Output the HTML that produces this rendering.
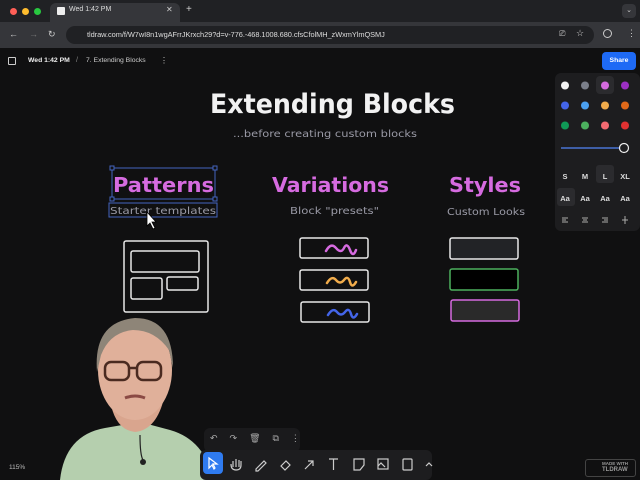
<!DOCTYPE html>
<html><head><meta charset="utf-8"><style>
*{margin:0;padding:0;box-sizing:border-box}
body{width:640px;height:480px;overflow:hidden;background:#101011;font-family:"Liberation Sans",sans-serif;position:relative}
.abs{position:absolute}
</style></head><body>
<!-- tab bar -->
<div class="abs" style="left:0;top:0;width:640px;height:22px;background:#202124"></div>
<div class="abs" style="left:10px;top:8px;width:7px;height:7px;border-radius:50%;background:#ff5f57"></div>
<div class="abs" style="left:22px;top:8px;width:7px;height:7px;border-radius:50%;background:#febc2e"></div>
<div class="abs" style="left:34px;top:8px;width:7px;height:7px;border-radius:50%;background:#28c840"></div>
<div class="abs" style="left:50px;top:3px;width:130px;height:19px;background:#35363a;border-radius:6px 6px 0 0"></div>
<div class="abs" style="left:57px;top:7px;width:8px;height:8px;background:#eee;border-radius:1px"></div>
<div class="abs" style="left:69px;top:6px;color:#ddd;font-size:7px">Wed 1:42 PM</div>
<div class="abs" style="left:166px;top:5px;color:#ccc;font-size:8px">✕</div>
<div class="abs" style="left:186px;top:4px;color:#ccc;font-size:10px">+</div>
<div class="abs" style="left:622px;top:4px;width:14px;height:14px;background:#35363a;border-radius:4px;color:#ccc;font-size:7px;text-align:center;line-height:14px">⌄</div>
<!-- address bar -->
<div class="abs" style="left:0;top:22px;width:640px;height:26px;background:#35363a"></div>
<div class="abs" style="left:9px;top:29px;color:#ccc;font-size:9px">←</div>
<div class="abs" style="left:29px;top:29px;color:#777;font-size:9px">→</div>
<div class="abs" style="left:48px;top:29px;color:#ccc;font-size:9px">↻</div>
<div class="abs" style="left:66px;top:26px;width:528px;height:18px;background:#202124;border-radius:9px"></div>
<div class="abs" style="left:87px;top:30px;color:#ddd;font-size:7.4px;letter-spacing:-0.05px">tldraw.com/f/W7wI8n1wgAFrrJKrxch29?d=v-776.-468.1008.680.cfsCfolMH_zWxmYlmQSMJ</div>
<div class="abs" style="left:559px;top:29px;color:#ccc;font-size:8px">⎚</div>
<div class="abs" style="left:576px;top:28px;color:#ccc;font-size:9px">☆</div>
<div class="abs" style="left:603px;top:29px;width:9px;height:9px;border:1px solid #ccc;border-radius:50%"></div>
<div class="abs" style="left:627px;top:28px;color:#ccc;font-size:9px">⋮</div>
<!-- tldraw top -->
<div class="abs" style="left:8px;top:57px;width:8px;height:8px;border:1px solid #ccc;border-radius:1px"></div>
<div class="abs" style="left:28px;top:57px;color:#eee;font-size:6.8px;font-weight:bold">Wed 1:42 PM</div>
<div class="abs" style="left:76px;top:57px;color:#888;font-size:7px">/</div>
<div class="abs" style="left:86px;top:57px;color:#ccc;font-size:6.8px">7. Extending Blocks</div>
<div class="abs" style="left:160px;top:56px;color:#ccc;font-size:8px">⋮</div>
<div class="abs" style="left:602px;top:52px;width:34px;height:18px;background:#1e6af5;border-radius:4px;color:#fff;font-size:6.8px;font-weight:bold;text-align:center;line-height:18px">Share</div>
<!-- style panel -->
<div class="abs" style="left:555px;top:73px;width:85px;height:158px;background:#1d1d1f;border-radius:6px"></div>
<div class="abs" style="left:596px;top:76px;width:18px;height:18px;background:#2b2b2e;border-radius:4px"></div>
<svg class="abs" style="left:555px;top:70px" width="85" height="165">
<g>
<circle cx="10" cy="15.5" r="4" fill="#f2f2f2"/><circle cx="30" cy="15.5" r="4" fill="#7b7f8a"/><circle cx="50" cy="15.5" r="4" fill="#d66be0"/><circle cx="70" cy="15.5" r="4" fill="#9c2fc4"/>
<circle cx="10" cy="35.5" r="4" fill="#4465e9"/><circle cx="30" cy="35.5" r="4" fill="#4ba1f1"/><circle cx="50" cy="35.5" r="4" fill="#f1ac4b"/><circle cx="70" cy="35.5" r="4" fill="#e16919"/>
<circle cx="10" cy="55.5" r="4" fill="#109a57"/><circle cx="30" cy="55.5" r="4" fill="#4cb05e"/><circle cx="50" cy="55.5" r="4" fill="#f46a71"/><circle cx="70" cy="55.5" r="4" fill="#e03131"/>
<line x1="6" y1="78" x2="70" y2="78" stroke="#4a74d4" stroke-width="1.5"/>
<circle cx="69" cy="78" r="4.5" fill="#1d1d1f" stroke="#eee" stroke-width="1.2"/>
<rect x="41" y="95" width="18" height="18" rx="3" fill="#2b2b2e"/>
<rect x="2" y="118" width="18" height="18" rx="3" fill="#2b2b2e"/>
<g fill="#ddd" font-family="Liberation Sans" font-size="7.5" font-weight="bold" text-anchor="middle">
<text x="10" y="109">S</text><text x="30" y="109">M</text><text x="50" y="109">L</text><text x="70" y="109">XL</text>
<text x="10" y="131">Aa</text><text x="30" y="131">Aa</text><text x="50" y="131">Aa</text><text x="70" y="131">Aa</text></g>
<g stroke="#aaa" stroke-width="1"><path d="M7 148h6M7 150h4M7 152h6"/><path d="M27 148h6M28 150h4M27 152h6"/><path d="M47 148h6M49 150h4M47 152h6"/><path d="M67 150h6M70 146v8"/></g>
</g></svg>
<!-- canvas content -->
<svg class="abs" style="left:0;top:0" width="640" height="480">
<g font-family="'DejaVu Sans',sans-serif" font-weight="bold">
<text x="210" y="113" fill="#f2f2f2" font-size="27" textLength="245" lengthAdjust="spacingAndGlyphs">Extending Blocks</text>
<text x="113" y="192" fill="#d66be0" font-size="20" textLength="101" lengthAdjust="spacingAndGlyphs">Patterns</text>
<text x="272" y="192" fill="#d66be0" font-size="20" textLength="117" lengthAdjust="spacingAndGlyphs">Variations</text>
<text x="449" y="192" fill="#d66be0" font-size="20" textLength="72" lengthAdjust="spacingAndGlyphs">Styles</text>
</g>
<g font-family="'DejaVu Sans',sans-serif" fill="#9a9aa6" font-size="10">
<text x="233" y="137" textLength="184" lengthAdjust="spacingAndGlyphs">...before creating custom blocks</text>
<text x="110" y="214" textLength="106" lengthAdjust="spacingAndGlyphs">Starter templates</text>
<text x="290" y="214" textLength="89" lengthAdjust="spacingAndGlyphs">Block "presets"</text>
<text x="447" y="215" textLength="78" lengthAdjust="spacingAndGlyphs">Custom Looks</text>
</g>
<g fill="none" stroke="#4465c0" stroke-width="1">
<rect x="112" y="168" width="103" height="31"/><rect x="109" y="203" width="108" height="14"/>
</g>
<g fill="#101011" stroke="#4465c0"><rect x="110" y="166" width="4" height="4"/><rect x="213" y="166" width="4" height="4"/><rect x="110" y="197" width="4" height="4"/><rect x="213" y="197" width="4" height="4"/></g>
<path d="M147 212v14l3-3 3 6 2-1-3-6h4z" fill="#fff" stroke="#000" stroke-width="0.8"/>
<g fill="none" stroke="#e8e8e8" stroke-width="1.5">
<rect x="124" y="241" width="84" height="71" rx="2"/>
<rect x="131" y="251" width="68" height="21" rx="2"/>
<rect x="131" y="278" width="31" height="21" rx="2"/>
<rect x="167" y="277" width="31" height="13" rx="2"/>
<rect x="300" y="238" width="68" height="20" rx="2"/>
<rect x="300" y="270" width="68" height="20" rx="2"/>
<rect x="301" y="302" width="68" height="20" rx="2"/>
<rect x="450" y="238" width="68" height="21" rx="2" fill="#222326"/>
</g>
<rect x="450" y="269" width="68" height="21" rx="2" fill="#000" stroke="#4cb05e" stroke-width="1.5"/>
<rect x="451" y="300" width="68" height="21" rx="2" fill="#2a2a2a" stroke="#d66be0" stroke-width="1.5"/>
<g fill="none" stroke-width="2.5" stroke-linecap="round">
<path d="M326 251q5-9 10-3t8 0 6 2 6 0" stroke="#d66be0"/>
<path d="M327 283q5-8 9-3t8 0 6 2 6 0" stroke="#f1ac4b"/>
<path d="M328 315q5-8 9-3t8 0 6 2 6 0" stroke="#4465e9"/>
</g>
</svg>
<!-- person -->
<svg class="abs" style="left:55px;top:310px" width="170" height="170">
<path d="M5 170 Q10 125 50 118 L85 112 L115 120 Q150 130 158 170Z" fill="#b5cfae"/>
<path d="M55 90 Q60 120 80 122 Q100 120 108 92 Z" fill="#d9a58e"/>
<ellipse cx="80" cy="60" rx="37" ry="50" fill="#e0b09a"/>
<path d="M42 62 Q38 12 80 8 Q118 8 118 58 L114 40 Q100 20 78 20 Q55 22 46 45Z" fill="#8e8578"/>
<g fill="none" stroke="#4a2a20" stroke-width="2.5"><rect x="50" y="52" width="24" height="18" rx="6"/><rect x="82" y="52" width="24" height="18" rx="6"/><path d="M74 58h8"/></g>
<path d="M70 88 Q80 84 90 88" stroke="#8a4a44" stroke-width="3" fill="none"/>
<path d="M85 125 Q85 145 88 150" stroke="#222" stroke-width="1.2" fill="none"/>
<circle cx="88" cy="152" r="3" fill="#222"/>
</svg>
<!-- toolbar -->
<div class="abs" style="left:204px;top:428px;width:96px;height:24px;background:#1a1a1c;border-radius:6px"></div>
<div class="abs" style="left:210px;top:433px;color:#aaa;font-size:9px;letter-spacing:12px">↶↷🗑⧉⋮</div>
<div class="abs" style="left:200px;top:450px;width:232px;height:30px;background:#1d1d1f;border-radius:6px"></div>
<div class="abs" style="left:203px;top:452px;width:20px;height:22px;background:#2f7bf0;border-radius:4px"></div>
<svg class="abs" style="left:200px;top:450px" width="240" height="30">
<g fill="none" stroke="#ccc" stroke-width="1.2">
<path d="M9 8v10l3-3 2 4 1-1-2-4h4z" stroke="#fff"/>
<path d="M33 17v-6M36 17v-8M39 17v-7M31 14q0 6 5 6t5-5v-4"/>
<path d="M56 19l8-8 2 2-8 8h-2z"/>
<path d="M81 16l5-5 4 4-5 5z"/>
<path d="M105 19l8-8M108 11h5v5"/>
<path d="M129 9h9M133.5 9v11"/>
<path d="M154 9h10v6l-4 5h-6z"/>
<rect x="178" y="9" width="10" height="10"/><path d="M178 16l3-3 4 4"/>
<rect x="203" y="9" width="9" height="11" rx="1"/>
<path d="M226 16l3-3 3 3"/>
</g></svg>
<div class="abs" style="left:9px;top:464px;color:#bbb;font-size:6.5px">115%</div>
<div class="abs" style="left:585px;top:459px;width:51px;height:18px;border:1px solid #444;border-radius:3px"></div>
<div class="abs" style="left:602px;top:461px;color:#999;font-size:4.5px;line-height:6px;font-weight:bold">MADE WITH<br><span style="font-size:6px">TLDRAW</span></div>
</body></html>
